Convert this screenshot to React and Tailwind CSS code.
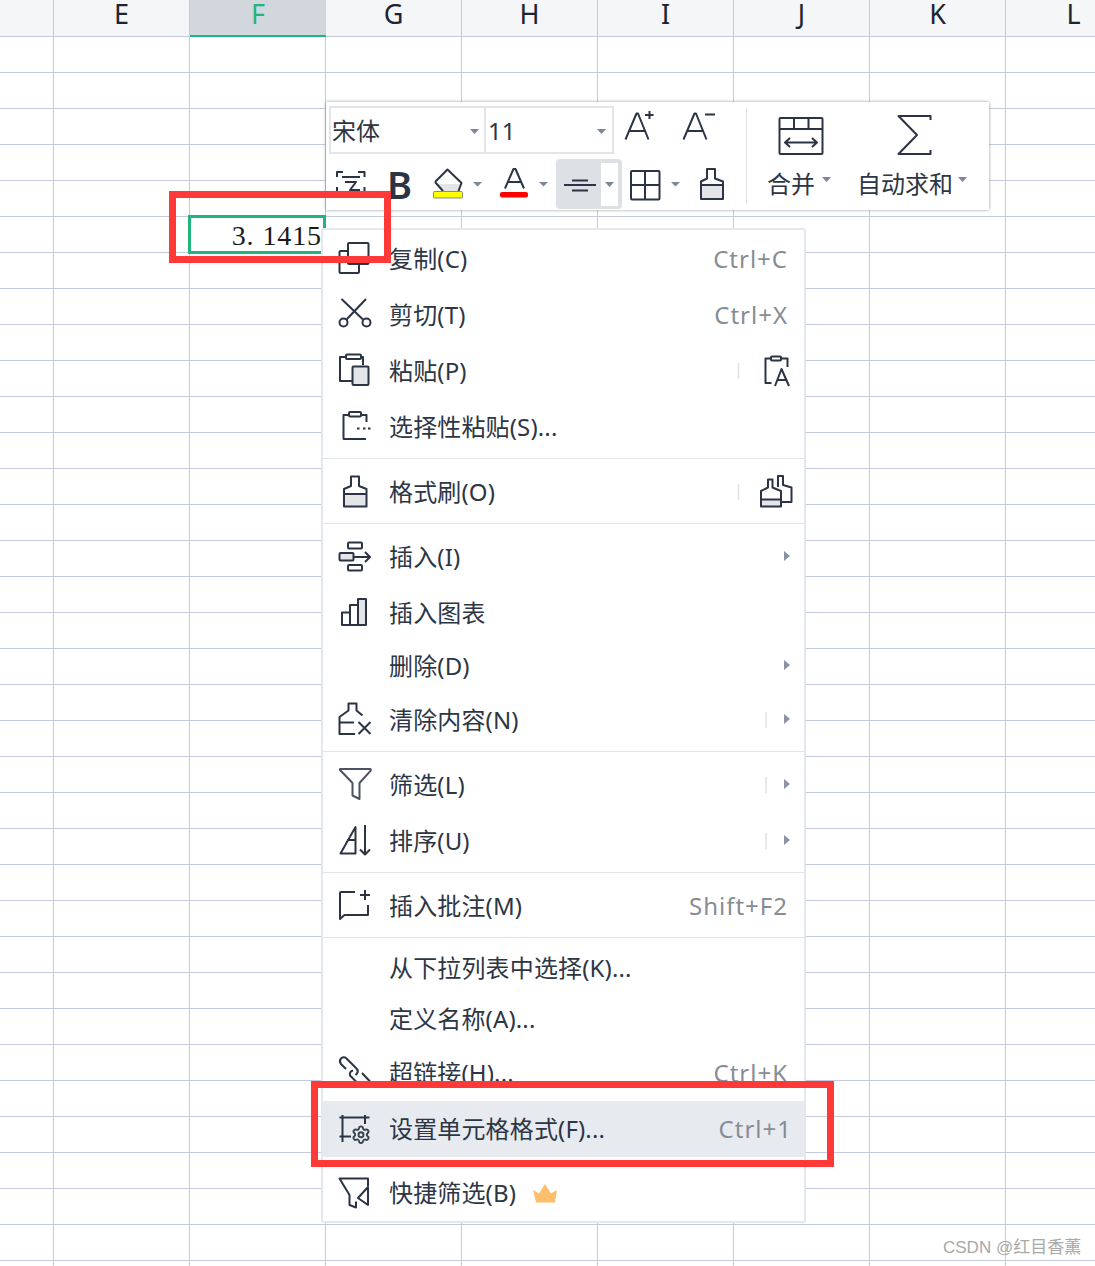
import React from "react";
import { Settings } from "lucide-react";

const INK = "#2b3445";
const GRAY = "#e3e5e8";

function Ic({ x, y, w, h, children, className = "", stroke = INK, sw = 2 }) {
  return (
    <svg
      viewBox={`${x} ${y} ${w} ${h}`}
      width={w}
      height={h}
      fill="none"
      stroke={stroke}
      strokeWidth={sw}
      strokeLinejoin="round"
      className={`shrink-0 block ${className}`}
    >
      {children}
    </svg>
  );
}

function Caret({ x, y, w = 9 }) {
  return <path d={`M${x} ${y}h${w}l-${w / 2} ${w * 0.5}z`} fill="#7e8699" stroke="none" />;
}

const MI = ({ c, children, stroke, sw }) => (
  <Ic x={336} y={c - 20} w={40} h={40} stroke={stroke} sw={sw}>
    {children}
  </Ic>
);

const icons = {
  copy: (
    <MI c={259}>
      <rect x="348" y="243" width="20.500" height="21" rx="1" />
      <path d="M348 251h-7.500a1 1 0 0 0-1 1v20a1 1 0 0 0 1 1h17.500a1 1 0 0 0 1-1v-8" />
    </MI>
  ),
  cut: (
    <MI c={315}>
      <circle cx="343.500" cy="322.500" r="4" />
      <circle cx="366.500" cy="322.500" r="4" />
      <path d="M341.500 299l21.500 20.500M366 299l-19.500 20.500" />
    </MI>
  ),
  paste: (
    <MI c={371}>
      <path d="M363 365v-8h-2M346 357h-6v24h12" />
      <rect x="346" y="354.500" width="15" height="4.500" rx="1" />
      <rect x="352.500" y="366.500" width="16" height="18.500" rx="1" fill={GRAY} />
    </MI>
  ),
  pasteS: (
    <MI c={427}>
      <path d="M366.500 422v-7h-5M349 415h-5.500v23.500a.5.5 0 0 0 .5.500h22" />
      <rect x="349" y="412" width="12" height="4.500" rx="1" />
      <path d="M357 428.500h2.500M363 428.500h2.500M368 428.500h2.500" />
    </MI>
  ),
  brush: (
    <MI c={492}>
      <rect x="344" y="494" width="22.500" height="12.500" fill={GRAY} stroke="none" />
      <path d="M351 476.500h8V486l7.500 3v17.500H344V489l7-3zM344 494h22.500" />
    </MI>
  ),
  insert: (
    <MI c={557}>
      <rect x="348" y="542.500" width="14" height="6" rx="1" />
      <rect x="339.500" y="553" width="14" height="7.500" rx="1" fill={GRAY} />
      <rect x="348" y="565" width="14" height="5.500" rx="1" />
      <path d="M353.500 557H370M365 552l5 5-5 5" />
    </MI>
  ),
  chart: (
    <MI c={613}>
      <rect x="358" y="599" width="8" height="26" fill={GRAY} />
      <path d="M342 625v-12.500h8V625zM350 625v-20h8V625z" />
    </MI>
  ),
  clear: (
    <MI c={720}>
      <path d="M355 734H339.500v-17l9-6.500v-7h8v7l6 5M339.500 722.500H354M358.500 722l12 12M370.500 722l-12 12" />
    </MI>
  ),
  filter: (
    <MI c={785} stroke="#4b5362">
      <path d="M340 769h30a1 1 0 0 1 .7 1.600L359.500 783v16l-7-3.500V783l-12-12.500a1 1 0 0 1-.5-1.500z" />
    </MI>
  ),
  sort: (
    <MI c={841}>
      <path d="M355.500 827v26.500H340.500zM347 840h8.500M365 825v29M360 849.500l5 5 5-5" />
    </MI>
  ),
  comment: (
    <MI c={906}>
      <path d="M355 892h-14a1 1 0 0 0-1 1v26l4.500-4h23.500v-10M360 895h10M365 890v10" />
    </MI>
  ),
  link: (
    <MI c={1073}>
      <path d="M346 1069l-5-5a4.200 4.200 0 0 1 0-5.500 4.200 4.200 0 0 1 5.500 0l10 10a3.800 3.800 0 0 1 .5 5l-1.500 1.500" />
      <path d="M353 1070.500a3.800 3.800 0 0 0-3 5l7 7M362 1073l8 8.500" />
    </MI>
  ),
  format: (
    <MI c={1129}>
      <path d="M342.500 1115v27M339.500 1117.500h30M365 1115v9M339.500 1136.500H351" />
      <Settings x={351} y={1124.700} size={20} strokeWidth={2.300} color="#3a4250" />
    </MI>
  ),
  quick: (
    <MI c={1193}>
      <path d="M368 1186v-7.500h-28.500l10 16.500v10l6.500 2.500v-6M368 1187l-10 11 10 7z" />
    </MI>
  ),
};

function RightIcon({ c, arrow, sepX, arrowY, children }) {
  return (
    <Ic x={736} y={c - 20} w={68} h={40} className="ml-auto">
      {sepX && <path d={`M${sepX} ${c - 8}v16`} stroke="#dfe1e5" strokeWidth="1.500" />}
      {arrow && <path d={`M784 ${arrowY - 5}l6 5-6 5z`} fill="#8b93a3" stroke="none" />}
      {children}
    </Ic>
  );
}

const SEP = "sep";
const SEP2 = "sep2";
const rows = [
  { h: 56, icon: "copy", label: "复制(C)", sc: "Ctrl+C" },
  { h: 56, icon: "cut", label: "剪切(T)", sc: "Ctrl+X" },
  {
    h: 56, icon: "paste", label: "粘贴(P)",
    right: (
      <RightIcon c={371} sepX={738.500}>
        <path d="M787.500 367v-8.500h-7M771 358.500h-5.500V383h6M775 386l6.500-17 7.500 17M777 380h10" />
        <rect x="771" y="356.500" width="10" height="4" rx="1" />
      </RightIcon>
    ),
  },
  { h: 56, icon: "pasteS", label: "选择性粘贴(S)..." },
  SEP,
  {
    h: 56, icon: "brush", label: "格式刷(O)",
    right: (
      <RightIcon c={492} sepX={738.500}>
        <rect x="761" y="500" width="20" height="6.500" fill={GRAY} stroke="none" />
        <path d="M768 479.500h4.500v8l8.500 3.500v15.500h-20V491l7-3.500zM761 499.500h20M778 487v-11h5v9l8.500 2.500V502H782" />
      </RightIcon>
    ),
  },
  SEP,
  { h: 56, icon: "insert", label: "插入(I)", right: <RightIcon c={557} arrow arrowY={556} /> },
  { h: 56, icon: "chart", label: "插入图表" },
  { h: 50, label: "删除(D)", right: <RightIcon c={666} arrow arrowY={665} /> },
  { h: 58, icon: "clear", label: "清除内容(N)", right: <RightIcon c={720} arrow arrowY={719} sepX={766} /> },
  SEP2,
  { h: 56, icon: "filter", label: "筛选(L)", right: <RightIcon c={785} arrow arrowY={784} sepX={766} /> },
  { h: 56, icon: "sort", label: "排序(U)", right: <RightIcon c={841} arrow arrowY={840} sepX={766} /> },
  SEP,
  { h: 56, icon: "comment", label: "插入批注(M)", sc: "Shift+F2" },
  SEP,
  { h: 50, label: "从下拉列表中选择(K)..." },
  { h: 52, label: "定义名称(A)..." },
  { h: 56, icon: "link", label: "超链接(H)...", sc: "Ctrl+K" },
  { h: 56, icon: "format", label: "设置单元格格式(F)...", sc: "Ctrl+1", active: true },
  { h: 8 },
  { h: 56, icon: "quick", label: "快捷筛选(B)", crown: true },
];

const FONT = "font-['Noto_Sans','Noto_Sans_CJK_SC',sans-serif]";

function MenuRow({ r }) {
  return (
    <div
      className={`flex items-center ${r.active ? "bg-[#e7eaef]" : ""}`}
      style={{ height: r.h }}
    >
      {r.label && (
        <>
          <div className="ml-[13px] w-[40px] shrink-0">{r.icon && icons[r.icon]}</div>
          <span className="ml-[13px] whitespace-nowrap text-[24px] leading-none tracking-[0.15px] text-[#2d3645]">{r.label}</span>
          {r.crown && (
            <svg viewBox="533 1181 24 20" width="24" height="20" className="ml-[17px] shrink-0">
              <path d="M533 1188l6 3.500 6-9.500 6 9.500 6-3.500-2 12.500h-19z" fill="#fdbf6b" />
            </svg>
          )}
          {r.sc && (
            <span className={`ml-auto whitespace-nowrap text-[24px] leading-none tracking-[1px] text-[#878c95] ${r.active ? "pr-[12px]" : "pr-[16px]"}`}>
              {r.sc}
            </span>
          )}
          {r.right}
        </>
      )}
    </div>
  );
}

const cols = ["E", "F", "G", "H", "I", "J", "K", "L"];

function Sheet() {
  return (
    <div className="w-[1150px]">
      <div className="flex h-[37px] bg-[#f5f6f8] border-b border-[#c3cadb]">
        <div className="w-[54px] shrink-0 border-r border-[#c3cadb]" />
        {cols.map((c) =>
          c === "F" ? (
            <div
              key={c}
              className="-mb-px flex h-[37px] w-[136px] shrink-0 items-center justify-center border-b-2 border-[#1fb57c] bg-[#d2d6dd] pb-[9px] text-[27px] leading-none text-[#1fb57c]"
            >
              {c}
            </div>
          ) : (
            <div
              key={c}
              className="flex w-[136px] shrink-0 items-center justify-center border-r border-[#c3cadb] pb-[9px] text-[27px] leading-none text-[#1c2433]"
            >
              {c}
            </div>
          )
        )}
      </div>
      {Array.from({ length: 35 }).map((_, i) => (
        <div key={i} className="flex h-[36px] border-b border-[#c3cadb] bg-white">
          <div className="w-[54px] shrink-0 border-r border-[#c3cadb]" />
          {cols.map((c) => (
            <div key={c} className="w-[136px] shrink-0 border-r border-[#c3cadb]" />
          ))}
        </div>
      ))}
    </div>
  );
}

function Toolbar() {
  return (
    <div className="absolute left-[326px] top-[102px] flex h-[108px] w-[663px] bg-white shadow-[0_0_3px_rgba(60,70,90,0.55)]">
      <div className="w-[420px] shrink-0">
        <div className="flex h-[56px] items-start pl-[3px] pt-[4px]">
          <div className="flex h-[48px] w-[285px] border-2 border-[#e3e5e9]">
            <div className="relative w-[155px] border-r-2 border-[#e3e5e9] pl-[1px] text-[24px] leading-[46px] text-[#2d3645]">
              宋体
              <svg viewBox="0 0 9 5" width="9" height="5" className="absolute left-[139px] top-[21px]">
                <path d="M0 0h9L4.500 5z" fill="#7e8699" />
              </svg>
            </div>
            <div className="relative flex-1 pl-[2px] text-[24px] leading-[46px] text-[#2d3645]">
              11
              <svg viewBox="0 0 9 5" width="9" height="5" className="absolute left-[111px] top-[21px]">
                <path d="M0 0h9L4.500 5z" fill="#7e8699" />
              </svg>
            </div>
          </div>
          <Ic x={622} y={110} w={58} h={40} className="ml-[8px]">
            <path d="M625.500 143.500l11-26h1.500l10.500 26M629 135h16M645 119h8.500M649.500 115v8" />
          </Ic>
          <Ic x={680} y={110} w={40} h={40}>
            <path d="M683.500 143.500l11-26h1.500l10.500 26M687 135h16M705 118.500h10" />
          </Ic>
        </div>
        <div className="flex h-[52px] items-center pl-[8px]">
          <Ic x={334} y={158} w={52} h={50}>
            <path d="M337 176v-5h6M358 171h6.500v5M337 186v5h6M358 191h6.500v-5M342 176h18M345 181h11l-6 8h10" />
          </Ic>
          <span className="w-[32px] shrink-0 pl-[1px] text-[38px] font-semibold leading-none text-[#2b3445]">B</span>
          <Ic x={418} y={158} w={80} h={50}>
            <path d="M436 183h25l-3 7h-16z" fill={GRAY} stroke="none" />
            <path d="M435 181l12.500-12.500 14 13.500-3 8M435 181l8 9" />
            <rect x="433.500" y="190.500" width="29" height="6.500" rx="1" fill="#ffff00" stroke="#8b8b7a" strokeWidth="1" />
            <Caret x={473} y={181} />
          </Ic>
          <Ic x={498} y={158} w={54} h={50}>
            <path d="M505 187.500l8.500-19.500h2l8.500 19.500M508 181h13" />
            <rect x="500" y="191" width="28" height="5.500" rx="2" fill="#ff0000" stroke="none" />
            <Caret x={539} y={181} />
          </Ic>
          <div className="ml-[4px] flex h-[50px] w-[66px] shrink-0 items-center rounded-[4px] bg-[#dde1e6] pl-[4px]">
            <Ic x={560} y={158} w={41} h={50}>
              <path d="M572 179.500h16M564 184h32M572 189.500h16" />
            </Ic>
            <div className="flex h-[43px] w-[17px] shrink-0 items-center justify-center bg-white">
              <svg viewBox="0 0 9 5" width="9" height="5">
                <path d="M0 0h9L4.500 5z" fill="#7e8699" />
              </svg>
            </div>
          </div>
          <Ic x={626} y={158} w={58} h={50} className="ml-[4px]">
            <rect x="631" y="170" width="28.500" height="28.500" rx="1" />
            <path d="M645 170v28.500M631 184h28.500" />
            <Caret x={671} y={181} />
          </Ic>
          <Ic x={696} y={158} w={32} h={50} className="ml-[12px]">
            <rect x="701" y="184" width="22" height="14" fill={GRAY} stroke="none" />
            <path d="M707 168h8v9.500l8 3V198H701v-17.500l6-3zM701 184h22" />
          </Ic>
        </div>
      </div>
      <div className="my-[7px] w-px shrink-0 bg-[#dfe1e6]" />
      <div className="flex flex-1 items-stretch">
        <div className="flex w-[99px] shrink-0 flex-col">
          <Ic x={775} y={112} w={52} h={48} className="ml-[28px] mt-[10px]">
            <rect x="779.500" y="118" width="43" height="36" rx="1" />
            <path d="M780 129h42M794 118v11M808.500 118v11M785 142.500h32M790 138l-5 4.500 5 4.500M812 138l5 4.500-5 4.500" />
          </Ic>
          <div className="mt-[6px] flex items-center pl-[20px] text-[24px] leading-[36px] text-[#2d3645]">
            合并
            <svg viewBox="0 0 9 5" width="9" height="5" className="mb-[9px] ml-[7px]">
              <path d="M0 0h9L4.500 5z" fill="#7e8699" />
            </svg>
          </div>
        </div>
        <div className="flex flex-1 flex-col">
          <Ic x={890} y={112} w={48} h={48} className="ml-[44px] mt-[10px]">
            <path d="M930.500 120v-4H898.500L917 135l-18.500 19h32v-4" />
          </Ic>
          <div className="mt-[6px] flex items-center pl-[11px] text-[24px] leading-[36px] text-[#2d3645]">
            自动求和
            <svg viewBox="0 0 9 5" width="9" height="5" className="mb-[9px] ml-[5px]">
              <path d="M0 0h9L4.500 5z" fill="#7e8699" />
            </svg>
          </div>
        </div>
      </div>
    </div>
  );
}

function Menu() {
  return (
    <div className="absolute left-[321px] top-[228px] w-[485px] rounded-[3px] border-2 border-[#e2e7f0] bg-white pt-px">
      {rows.map((r, i) =>
        r === SEP ? (
          <div key={i} className="mb-[5px] mt-[3px] h-px bg-[#e2e4ea]" />
        ) : r === SEP2 ? (
          <div key={i} className="mb-[5px] mt-[2px] h-px bg-[#e2e4ea]" />
        ) : (
          <MenuRow key={i} r={r} />
        )
      )}
    </div>
  );
}

export default function App() {
  return (
    <div className={`relative h-[1266px] w-[1095px] overflow-hidden bg-white ${FONT}`}>
      <Sheet />
      <div className="absolute left-[188px] top-[215px] flex h-[39px] w-[138px] items-center justify-end border-[3px] border-[#1fb57c] pr-[1px] pt-[3px] font-['Liberation_Serif','Noto_Sans_CJK_SC',serif] text-[28px] leading-none tracking-[0.9px] text-[#1a1a1a]">
        3. 1415
      </div>
      <Toolbar />
      <Menu />
      <div className="absolute left-[169px] top-[191px] h-[72px] w-[222px] border-[7px] border-[#ff3838]" />
      <div className="absolute left-[311px] top-[1081px] h-[86px] w-[523px] border-[7px] border-[#ff3838]" />
      <div className="absolute left-[943px] top-[1237px] whitespace-nowrap font-['Liberation_Sans','Noto_Sans_CJK_SC',sans-serif] text-[17px] leading-[22px] text-[#a8a8a8]">
        CSDN @红目香薰
      </div>
    </div>
  );
}
